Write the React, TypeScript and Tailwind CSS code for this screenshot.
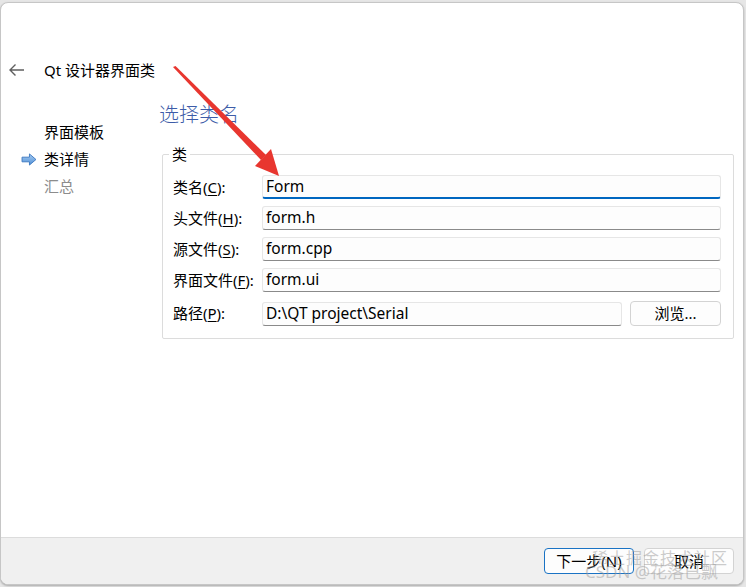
import React from "react";

const rows = [
  { label: "类名", key: "C", value: "Form", focused: true },
  { label: "头文件", key: "H", value: "form.h" },
  { label: "源文件", key: "S", value: "form.cpp" },
  { label: "界面文件", key: "F", value: "form.ui" },
];

const Field = ({ value, focused, className = "" }: { value: string; focused?: boolean; className?: string }) => (
  <div
    className={[
      "h-[24px] flex items-center px-[3px] bg-[#fdfdfd] border border-[#e6e6e6] rounded-[3px] text-[15.5px] text-black",
      focused ? "border-b-2 border-b-[#0067c0]" : "border-b-[#8a8a8a]",
      className,
    ].join(" ")}
  >
    {value}
  </div>
);

const Label = ({ label, k }: { label: string; k: string }) => (
  <div className="w-[89px] shrink-0 text-[15px] text-black">
    {label}(<span className="underline underline-offset-2">{k}</span>):
  </div>
);

export default function App() {
  return (
    <div className="relative w-[746px] h-[587px] bg-[#e6e6e6] overflow-hidden font-['Noto_Sans','Noto_Sans_CJK_SC',sans-serif]">
      <div className="mt-[2px] w-[744px] h-[583px] bg-white border border-[#c6c6c6] rounded-[8px] flex flex-col overflow-hidden shadow-[0_1px_2px_rgba(0,0,0,0.25)]">
        {/* header */}
        <div className="pt-[56px] flex items-center h-[78px]">
          <svg width="18" height="14" viewBox="0 0 18 14" className="ml-[7px] mr-[18px]">
            <path d="M16 7H2M7.5 1.5 2 7l5.5 5.5" fill="none" stroke="#5f5f5f" strokeWidth="1.4" />
          </svg>
          <span className="text-[15px] leading-[22px] text-black">Qt 设计器界面类</span>
        </div>

        <div className="flex-1 flex">
          {/* nav */}
          <div className="w-[158px] shrink-0 pt-[38px] pl-[20px] text-[15px] leading-[27px]">
            <div className="pl-[23px] text-black">界面模板</div>
            <div className="flex items-center text-black">
              <svg width="16" height="13" viewBox="0 0 17 14" className="mr-[7px]">
                <defs>
                  <linearGradient id="ag" x1="0" y1="0" x2="0" y2="1">
                    <stop offset="0" stopColor="#a9cdf2" />
                    <stop offset="1" stopColor="#4f8fd6" />
                  </linearGradient>
                </defs>
                <path d="M1 4.5h8V1l7 6-7 6V9.5H1z" fill="url(#ag)" stroke="#3d78c0" strokeWidth="1" strokeLinejoin="round" />
              </svg>
              类详情
            </div>
            <div className="pl-[23px] text-[#8c8c8c]">汇总</div>
          </div>

          {/* content */}
          <div className="flex-1 pr-[9px]">
            <div className="mt-[20px] text-[20px] leading-[28px] text-[#3d5ca8] font-light">选择类名</div>
            <fieldset className="mt-[15px] ml-[3px] border border-[#dcdcdc] rounded-[2px] pl-[10px] pr-[12px] pt-[11px] pb-[12px]">
              <legend className="-ml-[4px] px-[3px] text-[15px] leading-[20px] text-black">类</legend>
              <div className="flex flex-col gap-[7px]">
                {rows.map((r) => (
                  <div key={r.key} className="flex items-center">
                    <Label label={r.label} k={r.key} />
                    <Field value={r.value} focused={r.focused} className="flex-1" />
                  </div>
                ))}
                <div className="flex items-center mt-[2px]">
                  <Label label="路径" k="P" />
                  <Field value="D:\QT project\Serial" className="flex-1" />
                  <button className="ml-[8px] w-[91px] h-[25px] bg-[#fdfdfd] border border-[#d3d3d3] rounded-[4px] text-[15px] text-black">
                    浏览...
                  </button>
                </div>
              </div>
            </fieldset>
          </div>
        </div>

        {/* footer */}
        <div className="h-[47px] bg-[#f0f0f0] border-t border-[#dcdcdc] flex justify-end items-start pt-[10px] pr-[9px] gap-[10px]">
          <button className="w-[90px] h-[26px] bg-[#fdfdfd] border border-[#1a73c4] rounded-[4px] text-[15px] text-black">
            下一步(N)
          </button>
          <button className="w-[90px] h-[26px] bg-[#fdfdfd] border border-[#d3d3d3] rounded-[4px] text-[15px] text-black">
            取消
          </button>
        </div>
      </div>

      {/* red annotation arrow */}
      <svg className="absolute left-0 top-0 pointer-events-none" width="746" height="587">
        <polygon points="173,67 175.5,66 266,155 261,160" fill="#e8362f" />
        <polygon points="279,176 255,166 271,149" fill="#e8362f" />
      </svg>

      {/* watermark */}
      <div className="absolute left-[592px] top-[548px] text-[16px] leading-[20px] text-[#9a9a9a]/50 tracking-[1px] pointer-events-none">
        稀土掘金技术社区
      </div>
      <div className="absolute left-[585px] top-[562px] text-[17px] leading-[20px] text-[#9a9a9a]/50 pointer-events-none">
        CSDN @花落已飘
      </div>
    </div>
  );
}
